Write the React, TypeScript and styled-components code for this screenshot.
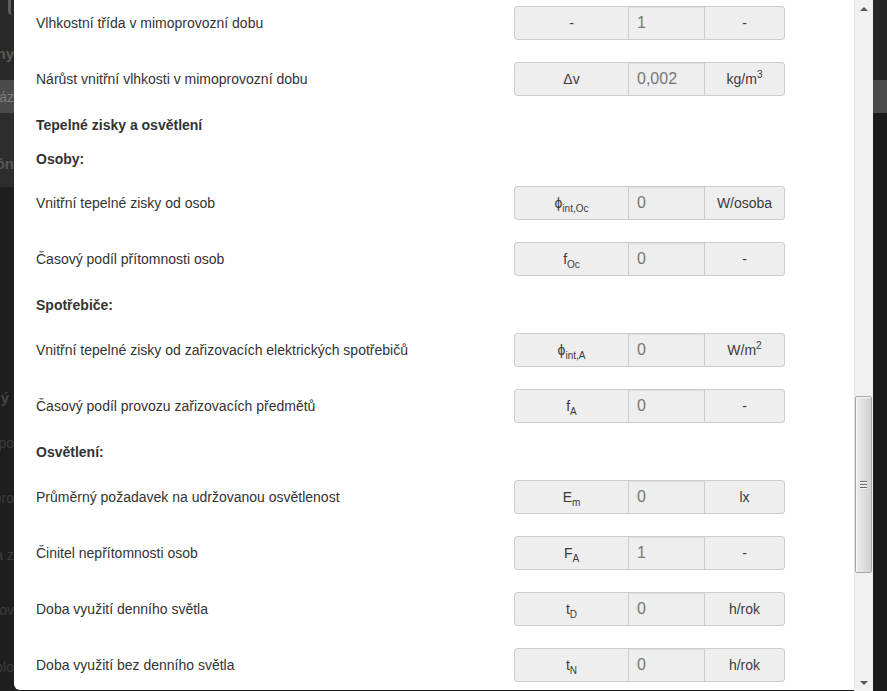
import React from "react";
import styled, { createGlobalStyle } from "styled-components";

const Global = createGlobalStyle`
  html, body { margin: 0; padding: 0; background: #1c1c1c; overflow: hidden; }
  body { font-family: "Liberation Sans", Arial, sans-serif; }
`;

const Screen = styled.div`
  display: flex;
  width: 887px;
  height: 691px;
  overflow: hidden;
  background: #1c1c1c;
`;

const Backdrop = styled.div<{ $w: number }>`
  width: ${(p) => p.$w}px;
  flex: none;
  display: flex;
  flex-direction: column;
  overflow: hidden;
`;

const Band = styled.div<{ $h: number; $bg: string }>`
  height: ${(p) => p.$h}px;
  background: ${(p) => p.$bg};
  flex: none;
  display: flex;
  flex-direction: column;
  overflow: hidden;
  position: relative;
`;

const Peek = styled.div<{ $h: number; $bold?: boolean; $color?: string; $pr?: number }>`
  height: ${(p) => p.$h}px;
  flex: none;
  display: flex;
  align-items: center;
  justify-content: flex-end;
  padding-right: ${(p) => p.$pr || 0}px;
  white-space: nowrap;
  font-size: ${(p) => (p.$bold ? 15 : 14)}px;
  font-weight: ${(p) => (p.$bold ? 700 : 400)};
  color: ${(p) => p.$color || "#3c3c3c"};
`;

const LogoMark = styled.div`
  position: absolute;
  left: 8px;
  top: -2px;
  width: 6px;
  height: 17px;
  border-left: 3px solid #5e5e5e;
  border-bottom-left-radius: 4px;
  box-sizing: border-box;
`;

const Modal = styled.div`
  width: 840px;
  height: 690px;
  flex: none;
  background: #fff;
  border-bottom-left-radius: 6px;
  overflow: hidden;
`;

const Body = styled.div`
  margin-top: -5px;
  padding-left: 22px;
  display: flex;
  flex-direction: column;
`;

const FieldRow = styled.div`
  display: grid;
  grid-template-columns: 478px 271px;
  align-items: center;
  height: 34px;
  padding: 11px 0;
`;

const Label = styled.div`
  font-size: 14px;
  line-height: 20px;
  color: #333;
`;

const Heading = styled.div<{ $h: number }>`
  height: ${(p) => p.$h}px;
  box-sizing: border-box;
  padding-top: 8px;
  font-size: 14px;
  line-height: 20px;
  font-weight: 700;
  color: #333;
`;

const Group = styled.div`
  display: grid;
  grid-template-columns: 114px 77px 80px;
  height: 34px;
`;

const Addon = styled.div<{ $side: "left" | "right" }>`
  box-sizing: border-box;
  background: #eee;
  border: 1px solid #ccc;
  ${(p) =>
    p.$side === "left"
      ? "border-right: 0; border-radius: 4px 0 0 4px;"
      : "border-left: 0; border-radius: 0 4px 4px 0;"}
  display: flex;
  align-items: center;
  justify-content: center;
  font-size: 14px;
  color: #3a3a3a;
  white-space: nowrap;
`;

const Value = styled.div`
  box-sizing: border-box;
  background: #eee;
  border: 1px solid #ccc;
  box-shadow: inset 0 1px 1px rgba(0, 0, 0, 0.075);
  display: flex;
  align-items: center;
  padding-left: 8px;
  font-size: 16px;
  color: #777;
`;

const Sub = styled.sub`
  font-size: 10px;
  line-height: 0;
  vertical-align: -4px;
`;

const Sup = styled.sup`
  font-size: 10px;
  line-height: 0;
  vertical-align: 6px;
`;

const Track = styled.div`
  width: 19px;
  height: 691px;
  flex: none;
  box-sizing: border-box;
  background: #f0f0f0;
  border-left: 1px solid #e6e6e6;
  display: flex;
  flex-direction: column;
`;

const ArrowBtn = styled.div`
  height: 17px;
  flex: none;
  display: flex;
  align-items: center;
  justify-content: center;
`;

const Tri = styled.div<{ $down?: boolean }>`
  width: 0;
  height: 0;
  border-left: 4px solid transparent;
  border-right: 4px solid transparent;
  ${(p) => (p.$down ? "border-top: 4px solid #555;" : "border-bottom: 4px solid #555;")}
`;

const TrackGap = styled.div<{ $h?: number }>`
  ${(p) => (p.$h ? `height: ${p.$h}px; flex: none;` : "flex: 1;")}
`;

const Thumb = styled.div`
  height: 177px;
  flex: none;
  margin-right: 1px;
  box-sizing: border-box;
  border: 1px solid #a6a6a6;
  border-radius: 2px;
  background: linear-gradient(to right, #ececec, #dcdcdc 60%, #d2d2d2);
  box-shadow: inset 1px 1px 0 #f8f8f8;
  display: flex;
  flex-direction: column;
  align-items: center;
  justify-content: center;
  gap: 2px;
`;

const GripLine = styled.div`
  width: 7px;
  height: 1px;
  background: #6b6b6b;
  box-shadow: 0 1px 0 #f4f4f4;
`;

type Field = {
  kind: "field";
  label: string;
  sym: React.ReactNode;
  value: string;
  unit: React.ReactNode;
};
type Head = { kind: "head"; text: string; h: number };

const items: (Field | Head)[] = [
  { kind: "field", label: "Vlhkostní třída v mimoprovozní dobu", sym: "-", value: "1", unit: "-" },
  {
    kind: "field",
    label: "Nárůst vnitřní vlhkosti v mimoprovozní dobu",
    sym: "Δv",
    value: "0,002",
    unit: (
      <>
        kg/m<Sup>3</Sup>
      </>
    ),
  },
  { kind: "head", text: "Tepelné zisky a osvětlení", h: 34 },
  { kind: "head", text: "Osoby:", h: 34 },
  {
    kind: "field",
    label: "Vnitřní tepelné zisky od osob",
    sym: (
      <>
        ϕ<Sub>int,Oc</Sub>
      </>
    ),
    value: "0",
    unit: "W/osoba",
  },
  {
    kind: "field",
    label: "Časový podíl přítomnosti osob",
    sym: (
      <>
        f<Sub>Oc</Sub>
      </>
    ),
    value: "0",
    unit: "-",
  },
  { kind: "head", text: "Spotřebiče:", h: 35 },
  {
    kind: "field",
    label: "Vnitřní tepelné zisky od zařizovacích elektrických spotřebičů",
    sym: (
      <>
        ϕ<Sub>int,A</Sub>
      </>
    ),
    value: "0",
    unit: (
      <>
        W/m<Sup>2</Sup>
      </>
    ),
  },
  {
    kind: "field",
    label: "Časový podíl provozu zařizovacích předmětů",
    sym: (
      <>
        f<Sub>A</Sub>
      </>
    ),
    value: "0",
    unit: "-",
  },
  { kind: "head", text: "Osvětlení:", h: 35 },
  {
    kind: "field",
    label: "Průměrný požadavek na udržovanou osvětlenost",
    sym: (
      <>
        E<Sub>m</Sub>
      </>
    ),
    value: "0",
    unit: "lx",
  },
  {
    kind: "field",
    label: "Činitel nepřítomnosti osob",
    sym: (
      <>
        F<Sub>A</Sub>
      </>
    ),
    value: "1",
    unit: "-",
  },
  {
    kind: "field",
    label: "Doba využití denního světla",
    sym: (
      <>
        t<Sub>D</Sub>
      </>
    ),
    value: "0",
    unit: "h/rok",
  },
  {
    kind: "field",
    label: "Doba využití bez denního světla",
    sym: (
      <>
        t<Sub>N</Sub>
      </>
    ),
    value: "0",
    unit: "h/rok",
  },
];

export default function App() {
  return (
    <>
      <Global />
      <Screen>
        <Backdrop $w={14}>
          <Band $h={80} $bg="#282828">
            <LogoMark />
            <Peek $h={38} />
            <Peek $h={30} $bold $color="#5a5a5a">
              <span>ny</span>
            </Peek>
          </Band>
          <Band $h={33} $bg="#4a4a4a">
            <Peek $h={33} $color="#7c7c7c">
              <span>áz</span>
            </Peek>
          </Band>
          <Band $h={74} $bg="#2d2d2d">
            <Peek $h={35} />
            <Peek $h={30} $bold $color="#575757">
              <span>ón</span>
            </Peek>
          </Band>
          <Band $h={504} $bg="#1e1e1e">
            <Peek $h={195} />
            <Peek $h={30} $bold $color="#474747" $pr={5}>
              <span>ý</span>
            </Peek>
            <Peek $h={16} />
            <Peek $h={30} $color="#3d3d3d">
              <span>po</span>
            </Peek>
            <Peek $h={25} />
            <Peek $h={30} $color="#3d3d3d">
              <span>oro</span>
            </Peek>
            <Peek $h={27} />
            <Peek $h={30} $color="#3d3d3d">
              <span>a z</span>
            </Peek>
            <Peek $h={25} />
            <Peek $h={30} $color="#3d3d3d">
              <span>nov</span>
            </Peek>
            <Peek $h={27} />
            <Peek $h={30} $color="#3d3d3d">
              <span>olo</span>
            </Peek>
          </Band>
        </Backdrop>

        <Modal>
          <Body>
            {items.map((it, i) =>
              it.kind === "head" ? (
                <Heading key={i} $h={it.h}>
                  {it.text}
                </Heading>
              ) : (
                <FieldRow key={i}>
                  <Label>{it.label}</Label>
                  <Group>
                    <Addon $side="left">
                      <span>{it.sym}</span>
                    </Addon>
                    <Value>{it.value}</Value>
                    <Addon $side="right">
                      <span>{it.unit}</span>
                    </Addon>
                  </Group>
                </FieldRow>
              )
            )}
          </Body>
        </Modal>

        <Track>
          <ArrowBtn>
            <Tri />
          </ArrowBtn>
          <TrackGap $h={379} />
          <Thumb>
            <GripLine />
            <GripLine />
            <GripLine />
          </Thumb>
          <TrackGap />
          <ArrowBtn>
            <Tri $down />
          </ArrowBtn>
        </Track>

        <Backdrop $w={14}>
          <Band $h={80} $bg="#262626" />
          <Band $h={33} $bg="#4b4b4b" />
          <Band $h={578} $bg="#1b1b1b" />
        </Backdrop>
      </Screen>
    </>
  );
}
